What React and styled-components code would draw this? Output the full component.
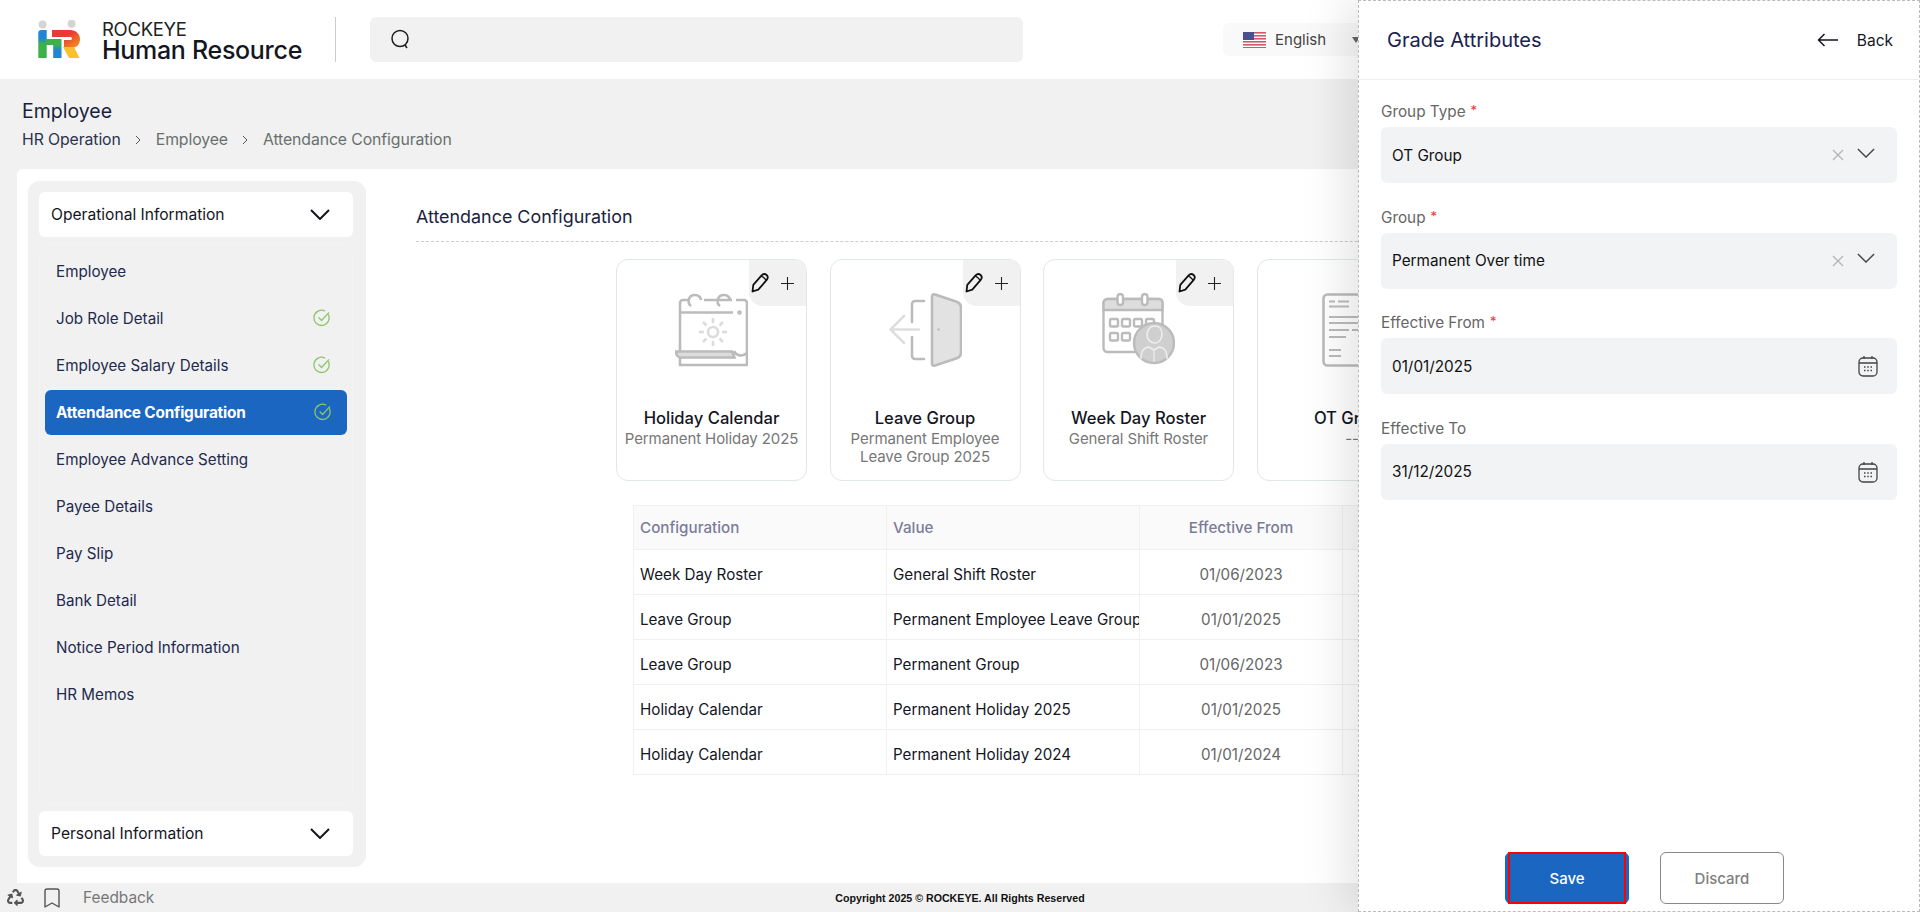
import React from 'react';
import styled, { createGlobalStyle } from 'styled-components';
import { Bookmark } from 'lucide-react';
import { FaRecycle } from 'react-icons/fa';

const menuItems = [
  { label: 'Employee' },
  { label: 'Job Role Detail', done: true },
  { label: 'Employee Salary Details', done: true },
  { label: 'Attendance Configuration', done: true, active: true },
  { label: 'Employee Advance Setting' },
  { label: 'Payee Details' },
  { label: 'Pay Slip' },
  { label: 'Bank Detail' },
  { label: 'Notice Period Information' },
  { label: 'HR Memos' },
];

const rows = [
  ['Week Day Roster', 'General Shift Roster', '01/06/2023'],
  ['Leave Group', 'Permanent Employee Leave Group 2025', '01/01/2025'],
  ['Leave Group', 'Permanent Group', '01/06/2023'],
  ['Holiday Calendar', 'Permanent Holiday 2025', '01/01/2025'],
  ['Holiday Calendar', 'Permanent Holiday 2024', '01/01/2024'],
];

const GlobalStyle = createGlobalStyle`
  html, body {
    margin: 0;
    padding: 0;
    height: 912px;
    overflow: hidden;
    background: #f1f1f1;
  }
  * {
    box-sizing: border-box;
  }
  body {
    font-family: Inter, "Noto Sans", sans-serif;
    color: #1a1f3c;
  }
`;

const Page = styled.div`
  position: relative;
  width: 1920px;
  height: 912px;
  overflow: hidden;
  display: flex;
  flex-direction: column;
`;

const Header = styled.header`
  height: 79px;
  flex: none;
  background: #fff;
  display: flex;
  align-items: center;
  padding-left: 37px;
`;

const Brand = styled.div`
  display: flex;
  align-items: center;
  gap: 21px;
  width: 299px;
  height: 45px;
  border-right: 1px solid #ccc;
`;

const BrandText = styled.div`
  display: flex;
  flex-direction: column;
  padding-top: 2px;
`;

const BrandTop = styled.span`
  font-size: 18.5px;
  line-height: 19px;
  letter-spacing: -0.3px;
  color: #222;
`;

const BrandName = styled.span`
  font-size: 25px;
  line-height: 23px;
  font-weight: 500;
  letter-spacing: -0.3px;
  color: #14161f;
`;

const SearchBox = styled.div`
  width: 653px;
  height: 45px;
  margin-left: 34px;
  background: #f1f1f1;
  border-radius: 6px;
  display: flex;
  align-items: center;
  padding-left: 20px;
`;

const Language = styled.div`
  width: 160px;
  height: 33px;
  margin-left: 200px;
  background: #f9f9f9;
  border-radius: 6px;
  display: flex;
  align-items: center;
  padding-left: 20px;
  gap: 9px;
  font-size: 15px;
  color: #444;
`;

const Caret = styled.svg`
  margin-left: 17px;
  flex: none;
`;

const Heading = styled.div`
  height: 90px;
  flex: none;
  padding: 19px 0 0 22px;
`;

const PageTitle = styled.h1`
  margin: 0 0 6px;
  font-size: 19.5px;
  line-height: 26px;
  font-weight: 400;
  color: #1a1f3c;
`;

const Crumbs = styled.div`
  display: flex;
  align-items: center;
  font-size: 15.8px;
  line-height: 20px;
  letter-spacing: -0.1px;
`;

const Crumb = styled.span`
  color: ${props => (props.$first ? '#2c3350' : '#68706e')};
`;

const CrumbArrow = styled.svg`
  margin: 0 14.5px;
  flex: none;
`;

const Card = styled.main`
  flex: 1;
  min-height: 0;
  margin: 0 17px;
  padding: 12px 11px 16px;
  background: #fff;
  border-radius: 6px 6px 0 0;
  display: flex;
`;

const Sidebar = styled.aside`
  width: 338px;
  flex: none;
  padding: 11px 13px 11px 11px;
  background: #f1f1f1;
  border-radius: 12px;
  display: flex;
  flex-direction: column;
`;

const AccordionHead = styled.div`
  height: 45px;
  flex: none;
  padding: 0 23px 0 12px;
  background: #fff;
  border-radius: 6px;
  display: flex;
  align-items: center;
  justify-content: space-between;
  font-size: 15.6px;
  color: #14161f;
`;

const MenuBody = styled.div`
  flex: 1;
  margin: 6px 0;
  padding: 4.5px 5px 0;
  border: 1px solid #f4f4f4;
  border-radius: 12px;
  display: flex;
  flex-direction: column;
  gap: 2.1px;
`;

const MenuItem = styled.div`
  height: 45px;
  flex: none;
  padding: 0 ${props => (props.$active ? '15px' : '16px')} 0 11px;
  border-radius: 6px;
  display: flex;
  align-items: center;
  justify-content: space-between;
  font-size: ${props => (props.$active ? '15.4px' : '15.2px')};
  font-weight: ${props => (props.$active ? 700 : 400)};
  letter-spacing: ${props => (props.$active ? '-0.2px' : '0')};
  color: ${props => (props.$active ? '#fff' : '#232a4d')};
  background: ${props => (props.$active ? '#1a66c0' : 'transparent')};
`;

const Content = styled.section`
  flex: 1;
  min-width: 0;
  padding: 24px 0 0 50px;
`;

const ContentTitle = styled.h2`
  margin: 0;
  height: 37px;
  border-bottom: 1px dashed #ccc;
  font-size: 17.9px;
  line-height: 24px;
  font-weight: 400;
  color: #1a2240;
`;

const Tiles = styled.div`
  display: flex;
  gap: 22.5px;
  margin: 17px 0 0 200px;
`;

const Tile = styled.div`
  position: relative;
  width: 191px;
  height: 222px;
  flex: none;
  padding-top: 33px;
  background: #fff;
  border: 1px solid #e0e8e8;
  border-radius: 12px;
  overflow: hidden;
  display: flex;
  flex-direction: column;
  align-items: center;
  text-align: center;
`;

const TileActions = styled.div`
  position: absolute;
  top: 0;
  right: 0;
  width: 57px;
  height: 46px;
  background: #f1f1f1;
  border-bottom-left-radius: 14px;
  display: flex;
  align-items: center;
  justify-content: space-between;
  padding: 0 12px 0 2px;
`;

const TileIcon = styled.svg`
  flex: none;
  height: 74px;
`;

const TileName = styled.div`
  margin-top: 41px;
  font-size: 16.6px;
  line-height: 20px;
  font-weight: 450;
  white-space: nowrap;
  color: #14161f;
`;

const TileValue = styled.div`
  margin-top: 2px;
  max-width: 180px;
  font-size: 15px;
  line-height: 18px;
  letter-spacing: -0.1px;
  color: #777;
`;

const Table = styled.table`
  margin: 24px 0 0 217px;
  width: 1000px;
  table-layout: fixed;
  border-collapse: collapse;
  font-size: 15.2px;
`;

const HeadCell = styled.th`
  height: 44px;
  padding: 0 6px;
  border: 1px solid #f0f0f0;
  background: #fafafa;
  font-weight: 500;
  color: #7a7c99;
  text-align: ${props => (props.$center ? 'center' : 'left')};
`;

const Cell = styled.td`
  height: 45px;
  padding: 5px 6px 0;
  border: 1px solid #f0f0f0;
  color: ${props => (props.$center ? '#666' : '#14161f')};
  text-align: ${props => (props.$center ? 'center' : 'left')};
  white-space: nowrap;
  overflow: hidden;
`;

const Footer = styled.footer`
  height: 29px;
  flex: none;
  display: grid;
  grid-template-columns: 1fr auto 1fr;
  align-items: center;
`;

const FooterLeft = styled.div`
  padding-left: 7px;
  display: flex;
  align-items: center;
  color: #555;
`;

const SaveMark = styled(Bookmark)`
  margin-left: 16px;
  flex: none;
`;

const FeedbackLabel = styled.span`
  margin-left: 19px;
  font-size: 15.4px;
  color: #777;
`;

const Copyright = styled.span`
  font-family: "Liberation Sans", Arial, sans-serif;
  font-size: 10.65px;
  font-weight: 700;
  color: #111;
`;

const Drawer = styled.div`
  position: absolute;
  top: 0;
  right: 0;
  width: 562px;
  height: 912px;
  background: #fff;
  border: 1px dashed #bbb;
  box-shadow: -10px 0 45px rgba(0, 0, 0, 0.12);
  display: flex;
  flex-direction: column;
`;

const DrawerHead = styled.div`
  height: 79px;
  flex: none;
  padding: 0 26px 0 28px;
  border-bottom: 1px solid #eee;
  display: flex;
  align-items: center;
  justify-content: space-between;
`;

const DrawerTitle = styled.h3`
  margin: 0;
  font-size: 20px;
  font-weight: 400;
  color: #1a2250;
`;

const BackLink = styled.div`
  display: flex;
  align-items: center;
  gap: 19px;
  font-size: 15.5px;
  color: #14161f;
`;

const Form = styled.div`
  padding: 23px 22px 0;
  display: flex;
  flex-direction: column;
  gap: 25.6px;
`;

const FieldLabel = styled.label`
  display: block;
  margin-bottom: 6px;
  font-size: 15.3px;
  line-height: 18px;
  color: #666;
`;

const Required = styled.span`
  margin-left: 5px;
  font-size: 13px;
  line-height: 0;
  vertical-align: 2px;
  color: #e53935;
`;

const FieldBox = styled.div`
  height: 56px;
  padding: 0 19px 0 11px;
  background: #f2f3f5;
  border-radius: 6px;
  display: flex;
  align-items: center;
  justify-content: space-between;
  font-size: 15.3px;
  color: #111;
`;

const FieldIcons = styled.div`
  margin-right: 3px;
  display: flex;
  align-items: center;
  gap: 13px;
`;

const SelectArrow = styled.span`
  display: flex;
  margin-bottom: 5px;
`;

const DrawerActions = styled.div`
  margin-top: auto;
  padding: 0 0 7px 11px;
  display: flex;
  justify-content: center;
  gap: 31px;
`;

const ActionButton = styled.button`
  position: relative;
  width: 124px;
  height: 52px;
  border-radius: 6px;
  font-family: inherit;
  font-size: 15px;
  font-weight: 500;
  color: ${props => (props.$primary ? '#fff' : '#808080')};
  background: ${props => (props.$primary ? '#1a66c0' : '#fff')};
  border: 1px solid ${props => (props.$primary ? '#1a66c0' : '#888')};
  ${props => props.$primary && `
    &::after {
      content: '';
      position: absolute;
      inset: -1px 2px -1px 2px;
      border: 2px solid #f00;
    }
  `}
`;

const Chevron = ({ w = 20, h = 11, color = '#14161f', width = 2 }) => (
  <svg width={w} height={h} viewBox="0 0 20 11" preserveAspectRatio="none" fill="none">
    <path d="M1 1l9 9 9-9" stroke={color} strokeWidth={width} />
  </svg>
);

const CheckMark = () => (
  <svg width="18" height="18" viewBox="0 0 18 18" fill="none" stroke="#8cc56a" strokeWidth="1.3">
    <path d="M15.3 5.4A7.6 7.6 0 1 1 12 2.1" />
    <path d="M5.6 8.5l3 3L16 3.4" />
  </svg>
);

const Logo = () => (
  <svg width="44" height="39" viewBox="0 0 44 39">
    <defs>
      <linearGradient id="hLeg" x1="0" y1="0" x2="0" y2="1">
        <stop offset="0.3" stopColor="#1f86d6" />
        <stop offset="0.5" stopColor="#3cb04b" />
      </linearGradient>
      <linearGradient id="hRight" x1="0" y1="0" x2="0" y2="1">
        <stop offset="0.3" stopColor="#3cb04b" />
        <stop offset="0.6" stopColor="#1f86d6" />
      </linearGradient>
      <linearGradient id="rBowl" x1="0" y1="0" x2="1" y2="1">
        <stop offset="0.4" stopColor="#e53c31" />
        <stop offset="0.9" stopColor="#f28a22" />
      </linearGradient>
    </defs>
    <circle cx="5.6" cy="4.4" r="4" fill="#d4d4d4" />
    <circle cx="34.6" cy="3.7" r="4" fill="#d4d4d4" />
    <path d="M1.3 13a3 3 0 0 1 3-3h5.400v28H1.300z" fill="url(#hLeg)" />
    <path d="M9 19h8v6H9z" fill="#3cb04b" />
    <path d="M16.200 19h8.300v19h-8.300z" fill="url(#hRight)" />
    <path d="M15 10h18c6 0 10 4 10 9s-3 9-9 9h-7v-8h6c1 0 2-.5 2-1.500s-1-1.500-2-1.500H15z" fill="url(#rBowl)" />
    <path d="M26 27h11l5.500 11H32z" fill="#fbc02d" />
  </svg>
);

const SearchIcon = () => (
  <svg width="21" height="21" viewBox="0 0 21 21" fill="none" stroke="#1c1c1c" strokeWidth="1.5">
    <circle cx="10" cy="9.5" r="8" />
    <path d="M15 16l2 3" />
  </svg>
);

const Flag = () => (
  <svg width="23" height="16" viewBox="0 0 23 16">
    <rect width="23" height="16" fill="#fff" />
    {[0, 1, 2, 3, 4, 5].map(i => (
      <rect key={i} y={i * 3} width="23" height="1.6" fill="#d3596a" />
    ))}
    <rect width="11" height="8" fill="#4a4f8f" />
  </svg>
);

const PencilIcon = () => (
  <svg width="18" height="20" viewBox="0 0 18 20" fill="none" stroke="#111" strokeWidth="1.8" strokeLinejoin="round">
    <path d="M1.5 18.5l.8-6.6L10.6 2.4c1.5-1.5 3.6-1.6 5-.4 1.4 1.3 1.3 3.4.1 4.9L7.3 16.6z" />
    <path d="M10 3.2c1.6.2 4.4 2.3 5 4.5" strokeWidth="1.3" />
  </svg>
);

const PlusIcon = () => (
  <svg width="13" height="13" viewBox="0 0 13 13" stroke="#222" strokeWidth="1.1">
    <path d="M6.5 0v13M0 6.5h13" />
  </svg>
);

const HolidayIcon = () => (
  <TileIcon width="73" viewBox="0 0 73 74" fill="none" stroke="#bbb" strokeWidth="2.6">
    <path d="M61 7h8a3 3 0 0 1 3 3v50" />
    <path d="M57 7H29M15 7H8a3 3 0 0 0-3 3v48" />
    <path d="M16 13c-4-3-3-11 4-11 4 0 6 3 6 5M45 13c-4-3-3-11 4-11 4 0 6 3 6 5" />
    <path d="M5 19.5h53" />
    <circle cx="64.5" cy="19.5" r="1" />
    <g stroke="#dcdcdc">
      <circle cx="38" cy="39" r="5" />
      <path d="M38 25v5M38 48v5M24 39h5M47 39h5M28 29l3.5 3.5M44.5 45.5L48 49M48 29l-3.5 3.5M31.5 45.5L28 49" />
    </g>
    <path d="M1 58.5h56l2.500 6H5c-2 0-4-3-4-6z" fill="#dcdcdc" />
    <path d="M59 58c2 5 9 6 13 2" />
    <path d="M5 65v7h67V60" />
  </TileIcon>
);

const LeaveIcon = () => (
  <TileIcon width="73" viewBox="0 0 73 74" fill="none" stroke="#bbb" strokeWidth="2.6">
    <path d="M35 8H26a3 3 0 0 0-3 3v18M23 44v19a3 3 0 0 0 3 3h9" strokeLinecap="round" />
    <path d="M30 36.500H2M15 23L1.500 36.500 15 50" stroke="#dedede" strokeLinecap="round" />
    <path d="M43 3.500c0-2 1-2.500 3-2l21 7c3 1 5 3 5 6v45c0 3-2 5-5 6l-21 7c-2 .5-3 0-3-2z" fill="#e2e2e2" strokeLinejoin="round" />
    <circle cx="49.500" cy="36.500" r="1" fill="#aaa" stroke="none" />
  </TileIcon>
);

const RosterIcon = () => (
  <TileIcon width="73" viewBox="0 0 73 74" fill="none" stroke="#bbb" strokeWidth="2.4">
    <rect x="1.500" y="6" width="59" height="53" rx="4" />
    <path d="M1.500 10a4 4 0 0 1 4-4h52a4 4 0 0 1 3 4v7H1.500z" fill="#ddd" />
    <rect x="15.500" y="1" width="5.500" height="11" rx="2.700" fill="#fff" />
    <rect x="40" y="1" width="5.500" height="11" rx="2.700" fill="#fff" />
    {[8, 20, 32, 44].map(x => (
      <rect key={x} x={x} y="26" width="8" height="7.500" rx="1.500" />
    ))}
    {[8, 20].map(x => (
      <rect key={x} x={x} y="40" width="8" height="7.500" rx="1.500" />
    ))}
    <circle cx="52" cy="50" r="20" fill="#cfcfcf" />
    <path d="M45 42c0-6 4-9 8-9s7 3 7 8c0 5-3 9-7 9s-8-3-8-8z" fill="#cfcfcf" stroke="#eee" strokeWidth="1.600" />
    <path d="M39 66c0-8 2-11 8-12l5 3 5-3c6 1 8 4 8 12" stroke="#eee" strokeWidth="1.600" />
    <path d="M52 57v12" stroke="#eee" strokeWidth="1.200" />
  </TileIcon>
);

const OtIcon = () => (
  <TileIcon width="60" viewBox="0 0 60 74" fill="none" stroke="#bbb" strokeWidth="2.600">
    <rect x="1.500" y="1.500" width="70" height="71" rx="4" />
    <path d="M7 8.500h6M16 8.500h11M7 13.500h20M7 24h50M7 30h50M7 37h20M30 37h10M7 44h17M7 57h12M7 63h12" strokeWidth="2.200" />
  </TileIcon>
);

const CalendarIcon = () => (
  <svg width="20" height="22" viewBox="0 0 20 22" fill="none" stroke="#444" strokeWidth="1.300">
    <rect x="1" y="3" width="18" height="18" rx="4" />
    <path d="M1 8h18M6 1v3M14 1v3" />
    <path d="M6 12h1.500M9.300 12h1.500M12.500 12h1.500M6 15.500h1.500M9.300 15.500h1.500M12.500 15.500h1.500" strokeWidth="1.500" />
  </svg>
);

const CrossIcon = () => (
  <svg width="12" height="12" viewBox="0 0 12 12" stroke="#b4b4b4" strokeWidth="1.300">
    <path d="M1 1l10 10M11 1L1 11" />
  </svg>
);

const BackArrow = () => (
  <svg width="21" height="14" viewBox="0 0 21 14" fill="none" stroke="#14161f" strokeWidth="1.500">
    <path d="M21 7H1.500M7.500 1L1.500 7l6 6" />
  </svg>
);

const Arrow = () => (
  <CrumbArrow width="6" height="10" viewBox="0 0 6 10" fill="none" stroke="#555" strokeWidth="1">
    <path d="M1 1l4 4-4 4" />
  </CrumbArrow>
);

const tiles = [
  { name: 'Holiday Calendar', value: 'Permanent Holiday 2025', Icon: HolidayIcon },
  { name: 'Leave Group', value: 'Permanent Employee Leave Group 2025', Icon: LeaveIcon },
  { name: 'Week Day Roster', value: 'General Shift Roster', Icon: RosterIcon },
  { name: 'OT Group', value: '--', Icon: OtIcon },
];

const SelectField = ({ label, value }) => (
  <div>
    <FieldLabel>{label}<Required>*</Required></FieldLabel>
    <FieldBox>
      {value}
      <FieldIcons>
        <CrossIcon />
        <SelectArrow><Chevron w={18} h={10} color="#444" width={1.5} /></SelectArrow>
      </FieldIcons>
    </FieldBox>
  </div>
);

const DateField = ({ label, value, required }) => (
  <div>
    <FieldLabel>{label}{required && <Required>*</Required>}</FieldLabel>
    <FieldBox>
      {value}
      <CalendarIcon />
    </FieldBox>
  </div>
);

const App = () => (
  <Page>
    <GlobalStyle />
    <Header>
      <Brand>
        <Logo />
        <BrandText>
          <BrandTop>ROCKEYE</BrandTop>
          <BrandName>Human Resource</BrandName>
        </BrandText>
      </Brand>
      <SearchBox><SearchIcon /></SearchBox>
      <Language>
        <Flag />
        English
        <Caret width="8" height="6" viewBox="0 0 8 6">
          <path d="M0 0h8L4 6z" fill="#666" />
        </Caret>
      </Language>
    </Header>

    <Heading>
      <PageTitle>Employee</PageTitle>
      <Crumbs>
        <Crumb $first>HR Operation</Crumb>
        <Arrow />
        <Crumb>Employee</Crumb>
        <Arrow />
        <Crumb>Attendance Configuration</Crumb>
      </Crumbs>
    </Heading>

    <Card>
      <Sidebar>
        <AccordionHead>
          Operational Information
          <Chevron />
        </AccordionHead>
        <MenuBody>
          {menuItems.map(item => (
            <MenuItem key={item.label} $active={item.active}>
              {item.label}
              {item.done && <CheckMark />}
            </MenuItem>
          ))}
        </MenuBody>
        <AccordionHead>
          Personal Information
          <Chevron />
        </AccordionHead>
      </Sidebar>

      <Content>
        <ContentTitle>Attendance Configuration</ContentTitle>
        <Tiles>
          {tiles.map(({ name, value, Icon }) => (
            <Tile key={name}>
              <TileActions>
                <PencilIcon />
                <PlusIcon />
              </TileActions>
              <Icon />
              <TileName>{name}</TileName>
              <TileValue>{value}</TileValue>
            </Tile>
          ))}
        </Tiles>
        <Table>
          <colgroup>
            <col width="253" />
            <col width="253" />
            <col width="203" />
            <col />
          </colgroup>
          <thead>
            <tr>
              <HeadCell>Configuration</HeadCell>
              <HeadCell>Value</HeadCell>
              <HeadCell $center>Effective From</HeadCell>
              <HeadCell $center>Effective To</HeadCell>
            </tr>
          </thead>
          <tbody>
            {rows.map(([config, value, from]) => (
              <tr key={config + value}>
                <Cell>{config}</Cell>
                <Cell>{value}</Cell>
                <Cell $center>{from}</Cell>
                <Cell />
              </tr>
            ))}
          </tbody>
        </Table>
      </Content>
    </Card>

    <Footer>
      <FooterLeft>
        <FaRecycle size={17} />
        <SaveMark size={24} strokeWidth={1.4} />
        <FeedbackLabel>Feedback</FeedbackLabel>
      </FooterLeft>
      <Copyright>Copyright 2025 © ROCKEYE. All Rights Reserved</Copyright>
    </Footer>

    <Drawer>
      <DrawerHead>
        <DrawerTitle>Grade Attributes</DrawerTitle>
        <BackLink>
          <BackArrow />
          Back
        </BackLink>
      </DrawerHead>
      <Form>
        <SelectField label="Group Type" value="OT Group" />
        <SelectField label="Group" value="Permanent Over time" />
        <DateField label="Effective From" value="01/01/2025" required />
        <DateField label="Effective To" value="31/12/2025" />
      </Form>
      <DrawerActions>
        <ActionButton $primary>Save</ActionButton>
        <ActionButton>Discard</ActionButton>
      </DrawerActions>
    </Drawer>
  </Page>
);

export default App;
